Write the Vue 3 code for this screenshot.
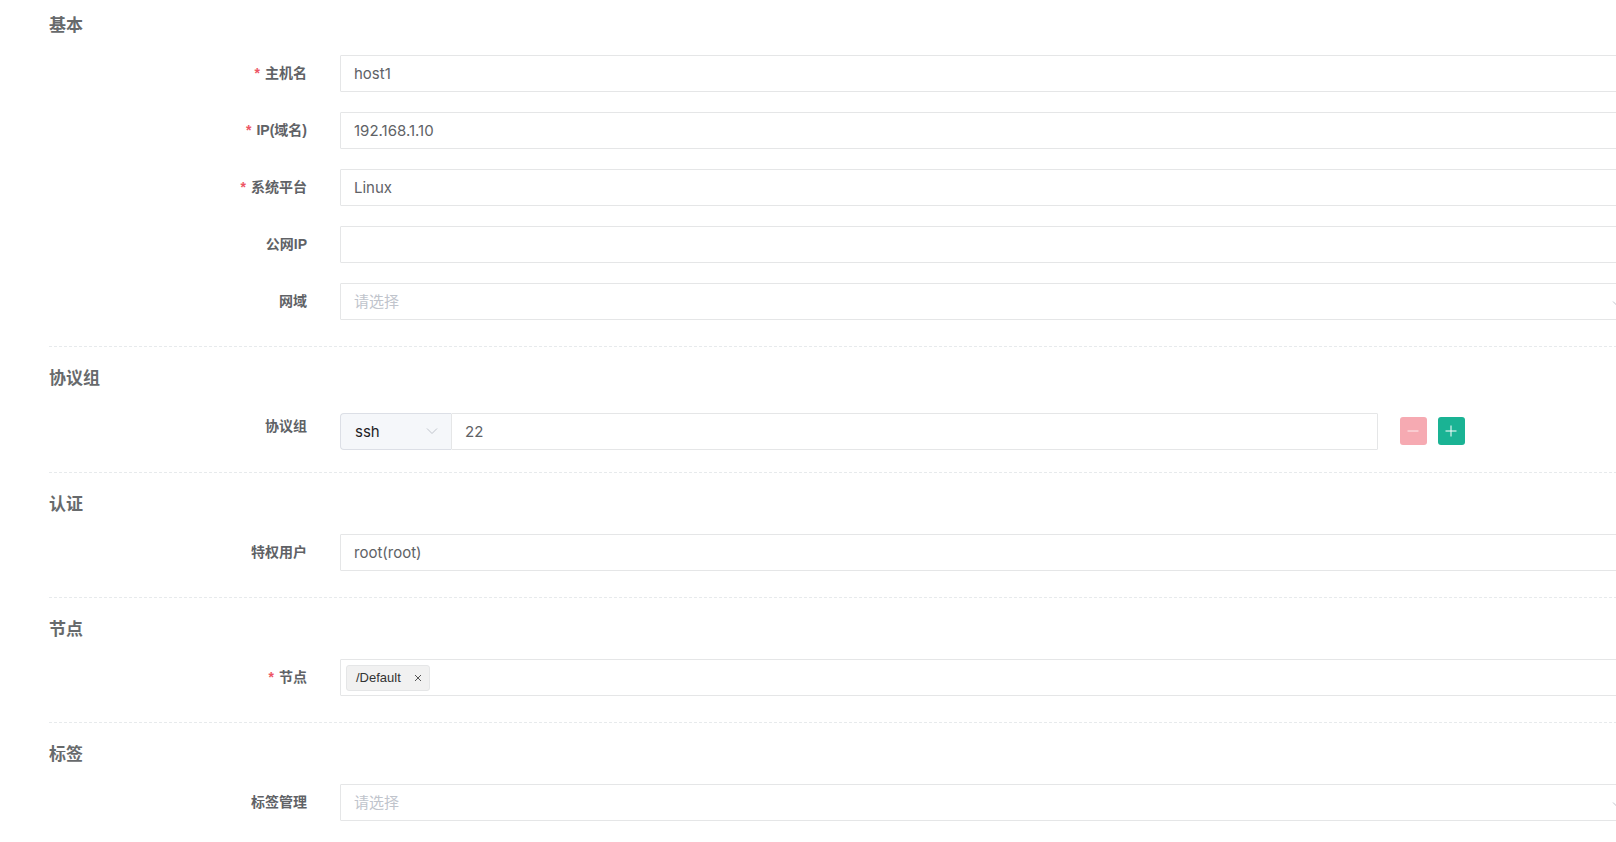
<script setup>
import { ref } from 'vue'

const hostname = ref('host1')
const address = ref('192.168.1.10')
const platform = ref('Linux')
const publicIp = ref('')
const domain = ref('')
const protocol = ref('ssh')
const port = ref('22')
const adminUser = ref('root(root)')
const nodes = ref(['/Default'])
const label = ref('')
</script>

<template>
  <main class="page">
    <form class="form" @submit.prevent>
      <section class="section">
        <h3>基本</h3>
        <div class="rows">
          <div class="row">
            <label class="name required" for="hostname">主机名</label>
            <input id="hostname" v-model="hostname" class="field" type="text" />
          </div>
          <div class="row">
            <label class="name required" for="address">IP(域名)</label>
            <input id="address" v-model="address" class="field" type="text" />
          </div>
          <div class="row">
            <label class="name required" for="platform">系统平台</label>
            <select id="platform" v-model="platform" class="field">
              <option>Linux</option>
            </select>
          </div>
          <div class="row">
            <label class="name" for="public-ip">公网IP</label>
            <input id="public-ip" v-model="publicIp" class="field" type="text" />
          </div>
          <div class="row">
            <label class="name" for="domain">网域</label>
            <div class="control">
              <select id="domain" v-model="domain" class="field empty">
                <option value="">请选择</option>
              </select>
              <svg class="arrow" viewBox="0 0 14 14" aria-hidden="true"><path d="M2 4.5 7 9.5 12 4.5" /></svg>
            </div>
          </div>
        </div>
      </section>

      <section class="section protocols">
        <h3>协议组</h3>
        <div class="row">
          <label class="name" for="port">协议组</label>
          <div class="control protocol-line">
            <div class="group">
              <div class="prepend">
                <select id="protocol" v-model="protocol" class="field" aria-label="协议">
                  <option>ssh</option>
                </select>
                <svg class="arrow" viewBox="0 0 14 14" aria-hidden="true"><path d="M2 4.5 7 9.5 12 4.5" /></svg>
              </div>
              <input id="port" v-model="port" class="field port" type="text" />
            </div>
            <div class="actions">
              <button class="square remove" type="button" disabled aria-label="删除">
                <svg viewBox="0 0 12 12" aria-hidden="true"><path d="M.5 6h11" /></svg>
              </button>
              <button class="square add" type="button" aria-label="添加">
                <svg viewBox="0 0 12 12" aria-hidden="true"><path d="M.5 6h11M6 .5v11" /></svg>
              </button>
            </div>
          </div>
        </div>
      </section>

      <section class="section">
        <h3>认证</h3>
        <div class="row">
          <label class="name" for="admin-user">特权用户</label>
          <select id="admin-user" v-model="adminUser" class="field">
            <option>root(root)</option>
          </select>
        </div>
      </section>

      <section class="section">
        <h3>节点</h3>
        <div class="row">
          <label class="name required" for="nodes">节点</label>
          <div class="field tags">
            <span v-for="node in nodes" :key="node" class="tag">
              {{ node }}
              <button type="button" aria-label="移除" @click="nodes = nodes.filter((n) => n !== node)">
                <svg viewBox="0 0 8 8" aria-hidden="true"><path d="M1 1 7 7M7 1 1 7" /></svg>
              </button>
            </span>
            <input id="nodes" type="text" />
          </div>
        </div>
      </section>

      <section class="section">
        <h3>标签</h3>
        <div class="row">
          <label class="name" for="label">标签管理</label>
          <div class="control">
            <select id="label" v-model="label" class="field empty">
              <option value="">请选择</option>
            </select>
            <svg class="arrow" viewBox="0 0 14 14" aria-hidden="true"><path d="M2 4.5 7 9.5 12 4.5" /></svg>
          </div>
        </div>
      </section>
    </form>
  </main>
</template>

<style>
body {
  margin: 0;
  background: #fff;
}
</style>

<style scoped>
* {
  box-sizing: border-box;
}

.page {
  overflow: hidden;
  padding-left: 49px;
  color: #606266;
  font-family: "Liberation Sans", "Noto Sans CJK SC", sans-serif;
  font-size: 14px;
}

/* The form runs past the right edge of its viewport. */
.form {
  margin-right: -21px;
}

.section {
  padding: 19px 0 26px;
  border-top: 1px dashed #e7eaec;
}

.section:first-child {
  padding-top: 13px;
  border-top: 0;
}

.section:last-child {
  padding-bottom: 20px;
}

.section.protocols {
  padding-bottom: 22px;
}

h3 {
  margin: 0 0 17px;
  color: #676a6c;
  font-size: 17px;
  font-weight: 700;
  line-height: 25px;
}

.rows {
  display: grid;
  gap: 20px;
}

.row {
  display: flex;
  gap: 33px;
}

.name {
  flex: 0 0 258px;
  line-height: 37px;
  font-weight: 700;
  text-align: right;
}

.required::before {
  content: "*";
  margin-right: 5px;
  color: #ed5565;
}

.control {
  position: relative;
  flex: 1;
  min-width: 0;
}

.field {
  display: block;
  flex: 1;
  width: 100%;
  min-width: 0;
  height: 37px;
  margin: 0;
  padding: 0 13px;
  border: 1px solid #e5e6e7;
  border-radius: 1px;
  outline: 0;
  background: #fff;
  color: #606266;
  font-family: Inter, "Noto Sans CJK SC", sans-serif;
  font-size: 15px;
  appearance: none;
}

.field.empty {
  color: #c0c4cc;
}

.arrow {
  position: absolute;
  top: 14px;
  right: 12px;
  width: 14px;
  height: 14px;
  fill: none;
  stroke: #c0c4cc;
  pointer-events: none;
}

.protocol-line {
  display: flex;
  align-items: flex-start;
  gap: 22px;
  margin-top: 5px;
}

.group {
  display: flex;
  flex: 0 0 80%;
}

.prepend {
  position: relative;
  flex: 0 0 111px;
}

.prepend .field {
  padding-left: 14px;
  border-color: #dcdfe6;
  border-right: 0;
  border-radius: 4px 0 0 4px;
  background: #f5f7fa;
  color: #1f2225;
}

.prepend .arrow {
  top: 11px;
}

.actions {
  display: flex;
  gap: 11px;
  padding-top: 4px;
}

.square {
  display: grid;
  place-items: center;
  width: 27px;
  height: 28px;
  padding: 0;
  border: 0;
  border-radius: 3px;
}

.square svg {
  width: 12px;
  height: 12px;
  fill: none;
  stroke: #fff;
}

.remove {
  background: #f6aab2;
}

.remove svg {
  opacity: 0.8;
}

.add {
  background: #1ab394;
}

.tags {
  display: flex;
  align-items: center;
  padding: 0 5px;
}

.tag {
  display: flex;
  align-items: center;
  gap: 9px;
  height: 26px;
  padding: 0 3px 0 9px;
  border: 1px solid #e5e6e7;
  border-radius: 3px;
  background: #f1f1f1;
  color: #333;
  font-family: "Liberation Sans", sans-serif;
  font-size: 13px;
}

.tag button {
  display: grid;
  place-items: center;
  width: 16px;
  height: 16px;
  padding: 0;
  border: 0;
  background: none;
}

.tag svg {
  width: 8px;
  height: 8px;
  fill: none;
  stroke: #555;
}

.tags input {
  flex: 1;
  min-width: 0;
  height: 28px;
  border: 0;
  outline: 0;
  background: none;
  font: inherit;
}
</style>
